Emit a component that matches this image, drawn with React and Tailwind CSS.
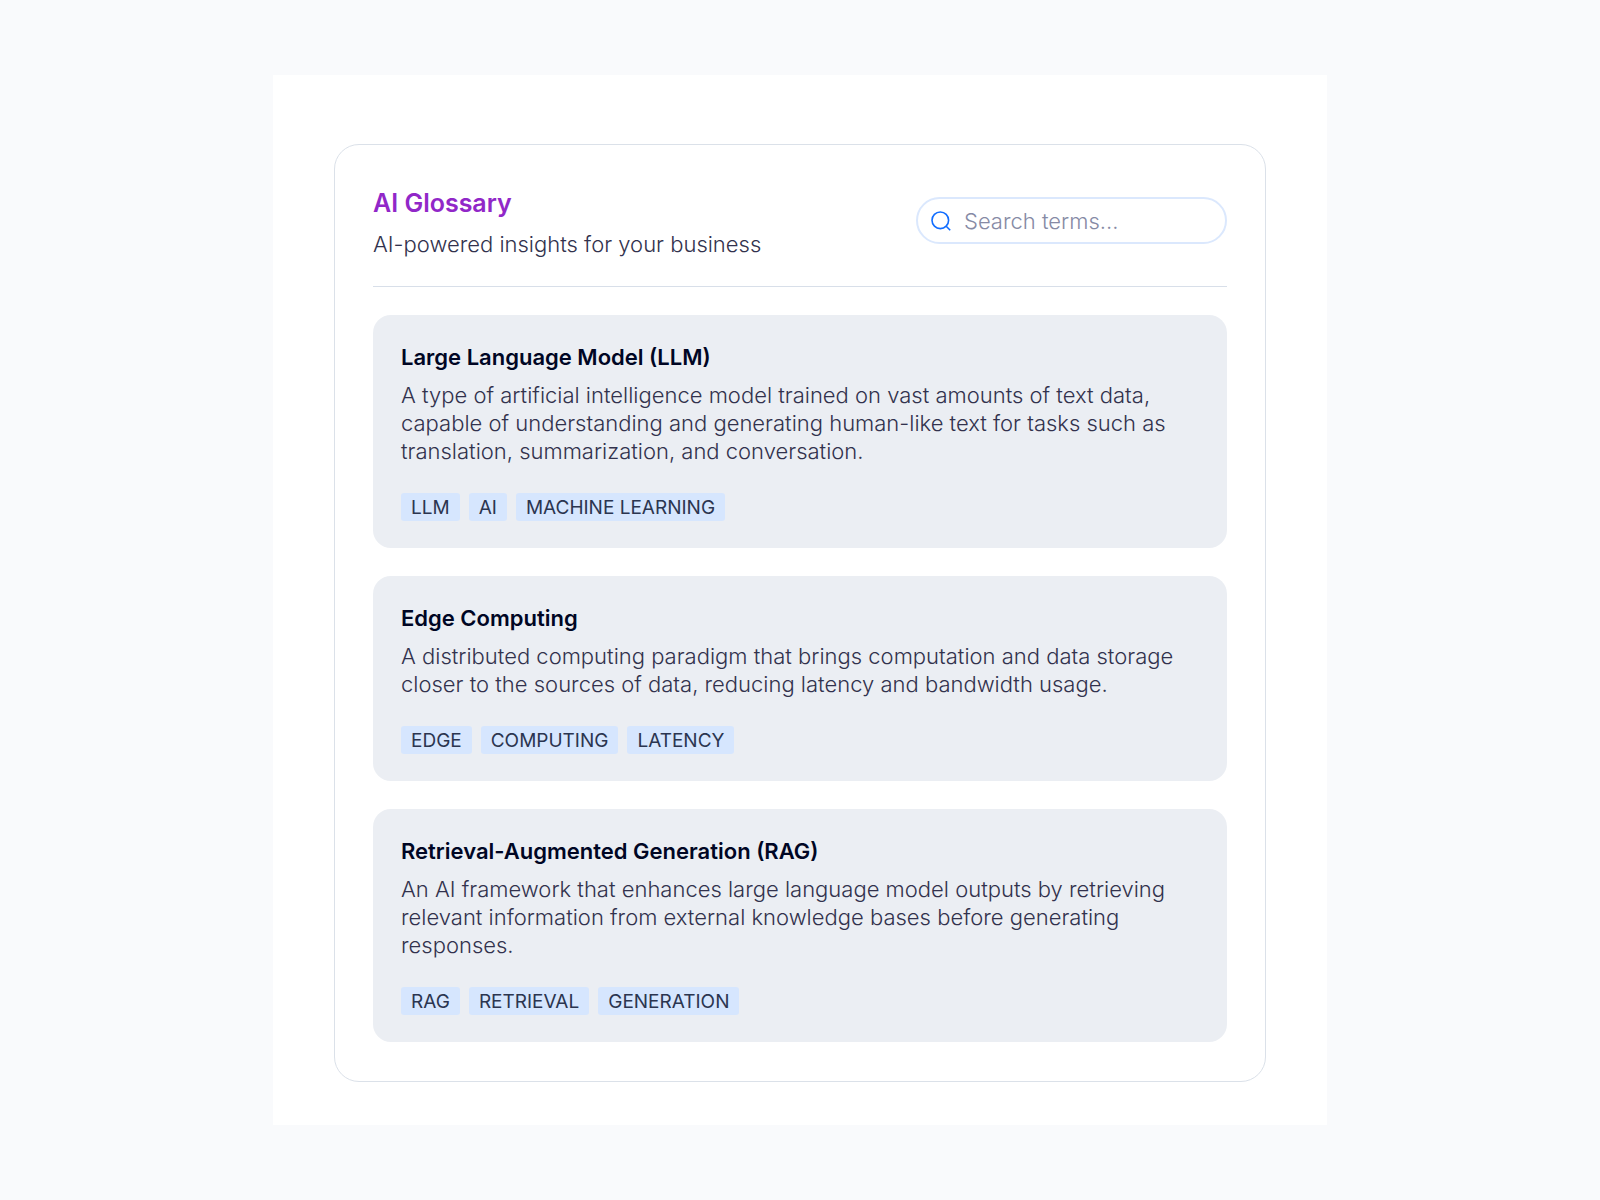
import { useState } from 'react';

const TERMS = [
  {
    id: 'llm',
    title: 'Large Language Model (LLM)',
    description:
      'A type of artificial intelligence model trained on vast amounts of text data, capable of understanding and generating human-like text for tasks such as translation, summarization, and conversation.',
    tags: ['LLM', 'AI', 'MACHINE LEARNING'],
  },
  {
    id: 'edge',
    title: 'Edge Computing',
    description:
      'A distributed computing paradigm that brings computation and data storage closer to the sources of data, reducing latency and bandwidth usage.',
    tags: ['EDGE', 'COMPUTING', 'LATENCY'],
  },
  {
    id: 'rag',
    title: 'Retrieval-Augmented Generation (RAG)',
    description:
      'An AI framework that enhances large language model outputs by retrieving relevant information from external knowledge bases before generating responses.',
    tags: ['RAG', 'RETRIEVAL', 'GENERATION'],
  },
];

function SearchIcon() {
  return (
    <svg width="20" height="20" viewBox="0 0 20 20" fill="none" stroke="currentColor" strokeWidth="1.6" className="shrink-0" aria-hidden="true">
      <circle cx="9.3" cy="9.3" r="8.3" />
      <path d="M15.2 15.2L19.2 19.2" />
    </svg>
  );
}

function TermCard({ term }) {
  return (
    <article className="rounded-[18px] bg-[#ebeef3] px-7 pt-7 pb-[27px]">
      <h2 className="text-[22px] leading-7 font-semibold text-[#000624]">{term.title}</h2>
      <p className="mt-[10px] text-[22px] leading-7 font-[350] text-[#32324d]">{term.description}</p>
      <ul className="mt-7 flex flex-wrap gap-[9px]">
        {term.tags.map((tag) => (
          <li key={tag} className="rounded-[3px] bg-[#d6e6fe] px-[10px] pt-px text-[19px] leading-[27px] text-[#2b3550]">
            {tag}
          </li>
        ))}
      </ul>
    </article>
  );
}

export default function App() {
  const [query, setQuery] = useState('');

  const q = query.trim().toLowerCase();
  const visible = TERMS.filter((t) => `${t.title} ${t.description} ${t.tags.join(' ')}`.toLowerCase().includes(q));

  return (
    <div className="min-h-screen bg-[#f9fafc] py-[75px] font-['Inter',sans-serif]">
      <main className="mx-auto max-w-[1054px] bg-white px-[61px] pt-[69px] pb-[43px]">
        <section className="rounded-[25px] border border-[#dbe1e9] px-[38px] pt-[38px] pb-[39px]">
          {/* Header */}
          <header className="flex items-center justify-between gap-6 border-b border-[#d8dfe9] pb-7">
            <div>
              <h1 className="text-[25px] leading-10 font-semibold text-[#9127c8]">AI Glossary</h1>
              <p className="mt-[7px] text-[22px] leading-7 font-[350] text-[#32324d]">AI-powered insights for your business</p>
            </div>
            <label className="flex h-[47px] w-[311px] items-center gap-[13px] rounded-full border-2 border-[#dbe8fd] px-[13px] text-[#116dff]">
              <SearchIcon />
              <input
                type="search"
                aria-label="Search terms"
                placeholder="Search terms..."
                value={query}
                onChange={(e) => setQuery(e.target.value)}
                className="min-w-0 flex-1 bg-transparent text-[22px] leading-7 font-[350] text-[#32324d] outline-none placeholder:text-[#868aa5]"
              />
            </label>
          </header>

          {/* Terms */}
          <div className="mt-7 flex flex-col gap-7">
            {visible.map((term) => (
              <TermCard key={term.id} term={term} />
            ))}
          </div>
        </section>
      </main>
    </div>
  );
}
